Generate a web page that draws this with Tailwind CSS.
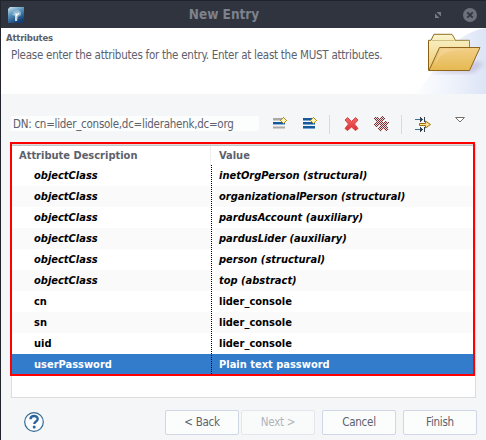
<!DOCTYPE html>
<html lang="en">
<head>
<meta charset="utf-8">
<title>New Entry</title>
<script src="https://cdn.jsdelivr.net/npm/@tailwindcss/browser@4"></script>
</head>
<body class="w-[486px] h-[440px] overflow-hidden bg-[#f5f6f8] border-l border-[#23252e] text-[11px] text-[#5c616c] flex flex-col font-['DejaVu_Sans_Condensed','DejaVu_Sans',sans-serif] [font-stretch:75%] whitespace-nowrap">
<header class="h-[28px] shrink-0 bg-[#2f343f] border-t border-[#20232b] flex items-center relative">
  <svg class="ml-[7px] mt-px" width="16" height="16" viewBox="0 0 16 16">
    <defs><linearGradient id="app" x1="0" y1="0" x2=".5" y2="1"><stop offset="0" stop-color="#d5e8f1"/><stop offset=".45" stop-color="#5b95bd"/><stop offset="1" stop-color="#123f77"/></linearGradient></defs>
    <path d="M2 0H16V14L14 16H0V2Z" fill="url(#app)"/>
    <path d="M4 8 6 4 10 3 13 5 13 8 10 10 9 14 7 14 7 9Z" fill="#b8d5e5" opacity=".6"/><path d="M8 6v8M8 9l3-3" stroke="#fff" stroke-width="1.2"/>
  </svg>
  <h1 class="flex-1 text-center pr-[11px] pb-px text-[13.5px] font-bold text-[#7c818c]">New Entry</h1>
  <svg class="mr-[22px]" width="6" height="6" viewBox="0 0 6 6" fill="#777b84"><path d="M1.5 0H6V4.5ZM0 1.5V6H4.5Z"/></svg>
  <svg class="mr-[9px]" width="14" height="14" viewBox="0 0 14 14"><circle cx="7" cy="7" r="7" fill="#6d717a"/><path d="M4.3 4.3 9.7 9.7M9.7 4.3 4.3 9.7" stroke="#2f343f" stroke-width="1.8"/></svg>
</header>
<section class="h-[66px] shrink-0 bg-white flex relative">
  <div class="flex-1">
    <h2 class="pl-[5px] pt-[3px] text-[9.5px] leading-[14px] font-bold tracking-[-0.22px]">Attributes</h2>
    <p class="pl-[10px] leading-[20px] text-[11.5px] tracking-[-0.26px]">Please enter the attributes for the entry. Enter at least the MUST attributes.</p>
  </div>
  <svg class="absolute right-0 top-0" width="75" height="66" viewBox="411 28 75 66">
    <defs>
      <linearGradient id="sky" x1="0" x2="1"><stop offset="0" stop-color="#fff"/><stop offset=".55" stop-color="#eef2fb"/><stop offset="1" stop-color="#dce4f6"/></linearGradient>
      <linearGradient id="back" x1="0" y1="0" x2="0" y2="1"><stop offset="0" stop-color="#fbf5cf"/><stop offset="1" stop-color="#edc870"/></linearGradient>
      <linearGradient id="front" x1="0" y1="0" x2="0" y2="1"><stop offset="0" stop-color="#f2cf87"/><stop offset="1" stop-color="#e5b951"/></linearGradient>
      <linearGradient id="edge" x1="0" y1="0" x2="1" y2="0"><stop offset="0" stop-color="#8b5f12"/><stop offset="1" stop-color="#98883c"/></linearGradient>
      <filter id="soft"><feGaussianBlur stdDeviation="2"/></filter>
    </defs>
    <path d="M411 94C425 88 430 73 440 60C451 44 466 31 486 28V94Z" fill="url(#sky)"/>
    <path d="M430 73H473L484 64 477 61Z" fill="#b3a9ca" opacity=".5" filter="url(#soft)"/>
    <path d="M428.500 70.500V40.500H431L434 34.500H452L455 39.500V40.500H469.500V70.500Z" transform="translate(0 -.2)" fill="url(#back)" stroke="url(#edge)"/>
    <path d="M432 40.500H454" stroke="#b5a35c" opacity=".6"/>
    <path d="M429 70.500 439.500 47.500H480L469.500 70.500Z" fill="url(#front)" stroke="#8e651b"/>
    <path d="M438 60C442 51 454 50 477 49H441L434 66Z" fill="#f6daa3" opacity=".5"/>
  </svg>
</section>
<main class="flex-1 flex flex-col">
  <div class="h-[48px] pt-[22px] pl-[10px] flex items-start shrink-0">
    <div class="w-[248px] h-[15px] bg-[#fcfdfd] pl-[2px] leading-[16px] text-[11.5px] tracking-[-0.26px]">DN: cn=lider_console,dc=liderahenk,dc=org</div>
    <svg class="-mt-[8px]" width="227" height="32" viewBox="259 108 227 32" shape-rendering="crispEdges">
      <g>
        <path d="M273 118h12v2h-12zM273 127h12v1h-12z" fill="#aaa9a8"/><path d="M273 120h12v1h-12zM273 126h12v1h-12zM273 128h12v1h-12z" fill="#d3d0cc"/>
        <path d="M273 122h12v2h-12z" fill="#185a99"/><path d="M273 124h12v1h-12z" fill="#8eb6dc"/>
      </g>
      <g><path d="M303 118h12v2h-12zM303 122h12v2h-12zM303 126h12v2h-12z" fill="#185a99"/><path d="M303 120h12v1h-12zM303 124h12v1h-12zM303 128h12v1h-12z" fill="#78a7d5"/></g>
      <g id="spark"><path d="M283 117h1v1h1v2h2v1h-2v2h-1v1h-1v-1h-1v-2h-2v-1h2v-2h1z" fill="#b18a20"/><path d="M282 118h3v1h1v3h-1v1h-3v-1h-1v-3h1z" fill="#b18a20"/><path d="M283 118h1v5h-1zM281 120h5v1h-5zM282 119h3v3h-3z" fill="#fff7b5"/></g>
      <use href="#spark" x="30"/>
      <path d="M329.500 115v19M401.500 115v19" stroke="#d8dade"/>
      <defs><linearGradient id="red" x1="0" y1="0" x2="0" y2="1"><stop stop-color="#f26a65"/><stop offset="1" stop-color="#dc2f36"/></linearGradient>
      <pattern id="dither" width="2" height="2" patternUnits="userSpaceOnUse"><path d="M0 0h1v1H0zM1 1h1v1H1z" fill="#852f35"/><path d="M1 0h1v1H1zM0 1h1v1H0z" fill="#e5dcdc"/></pattern></defs>
      <path d="M347.500 117.500 351.500 121.500 355.500 117.500 358 120 354.500 124 358 128.500 355.500 130.500 351.500 127 347.500 130.500 345 128.500 348.500 124 345 120Z" fill="url(#red)" stroke="#d94348" stroke-linejoin="round" shape-rendering="auto"/>
      <g fill="none" stroke="url(#dither)" stroke-width="4.200"><path d="M375.500 117.500 387.500 130.500M384 117.500 375.500 126.500M387.500 121.500 379 130.500"/></g>
      <g fill="#354252"><path d="M415 119h7v1h-7zM415 129h7v1h-7z" fill="#3b7196"/><path d="M420 117h1v1h1v1h1v1h-1v1h-1v1h-1zM424 117h1v5h-1zM420 127h1v1h1v1h1v1h-1v1h-1v1h-1zM424 127h1v5h-1z"/></g>
      <path d="M419.500 123.500h6v-2.500l5 3.500-5 3.500v-2.500h-6z" fill="#ffe48c" stroke="#9b6c13" shape-rendering="auto"/>
      <path d="M455.500 117.500h9l-4.500 4.500z" fill="#fff" stroke="#77716d" shape-rendering="auto"/>
    </svg>
  </div>
  <div class="ml-[9px] w-[466px] h-[256px] relative">
    <div class="absolute left-px top-[2px] w-[465px] h-[254px] bg-white border border-[#dcdcdc]"></div>
    <div class="relative w-[465px] h-[234px] border-2 border-[#ff0000] pt-px font-bold">
      <div class="h-[20px] border-t border-[#c5c5c5] grid grid-cols-[199px_1fr] items-center">
        <span class="pl-[7px] leading-[20px] border-r border-[#eeeeee]">Attribute Description</span><span class="pl-[8px]">Value</span>
      </div>
      <div class="relative text-black grid grid-cols-1 auto-rows-[21px] leading-[21px] h-[209px] overflow-hidden">
        <div class="grid grid-cols-[200px_1fr] italic"><span class="pl-[22px]">objectClass</span><span class="pl-[7px]">inetOrgPerson (structural)</span></div>
        <div class="grid grid-cols-[200px_1fr] italic bg-[#fafafa]"><span class="pl-[22px]">objectClass</span><span class="pl-[7px]">organizationalPerson (structural)</span></div>
        <div class="grid grid-cols-[200px_1fr] italic"><span class="pl-[22px]">objectClass</span><span class="pl-[7px]">pardusAccount (auxiliary)</span></div>
        <div class="grid grid-cols-[200px_1fr] italic bg-[#fafafa]"><span class="pl-[22px]">objectClass</span><span class="pl-[7px]">pardusLider (auxiliary)</span></div>
        <div class="grid grid-cols-[200px_1fr] italic"><span class="pl-[22px]">objectClass</span><span class="pl-[7px]">person (structural)</span></div>
        <div class="grid grid-cols-[200px_1fr] italic bg-[#fafafa]"><span class="pl-[22px]">objectClass</span><span class="pl-[7px]">top (abstract)</span></div>
        <div class="grid grid-cols-[200px_1fr]"><span class="pl-[22px]">cn</span><span class="pl-[7px]">lider_console</span></div>
        <div class="grid grid-cols-[200px_1fr] bg-[#fafafa]"><span class="pl-[22px]">sn</span><span class="pl-[7px]">lider_console</span></div>
        <div class="grid grid-cols-[200px_1fr]"><span class="pl-[22px]">uid</span><span class="pl-[7px]">lider_console</span></div>
        <div class="grid grid-cols-[200px_1fr] bg-[#337bcb] text-white"><span class="pl-[22px]">userPassword</span><span class="pl-[7px]">Plain text password</span></div>
        <i class="absolute left-[199px] top-0 bottom-0 w-px bg-[repeating-linear-gradient(to_bottom,#000_0_1px,transparent_1px_2px)]"></i>
      </div>
    </div>
  </div>
  <footer class="pt-[12px] pl-[23px] flex items-start">
    <svg class="mt-[2px]" width="20" height="20" viewBox="0 0 20 20"><circle cx="10" cy="10" r="9.300" fill="#fafcfd" stroke="#316a94" stroke-width="1.200"/><path d="M6.500 7.200C6.500 3 13.700 3 13.700 7C13.700 9.500 10.300 9.400 10.300 12" fill="none" stroke="#2d659b" stroke-width="2.400"/><circle cx="10.200" cy="15" r="1.500" fill="#2d659b"/></svg>
    <div class="ml-[121px] flex text-[11.5px] tracking-[-0.26px]">
      <button class="w-[74px] h-[25px] border border-[#cfd6e6] rounded-[2px] bg-[#fbfdfc]">&lt; Back</button>
      <button class="ml-[2px] w-[74px] h-[25px] border border-[#e3e6ee] rounded-[2px] bg-[#f9fbfb] text-[#b1b4ba]">Next &gt;</button>
      <button class="ml-[7px] w-[74px] h-[25px] border border-[#cfd6e6] rounded-[2px] bg-[#fbfdfc]">Cancel</button>
      <button class="ml-[7px] w-[74px] h-[25px] border border-[#cfd6e6] rounded-[2px] bg-[#fbfdfc]">Finish</button>
    </div>
  </footer>
</main>
</body>
</html>
